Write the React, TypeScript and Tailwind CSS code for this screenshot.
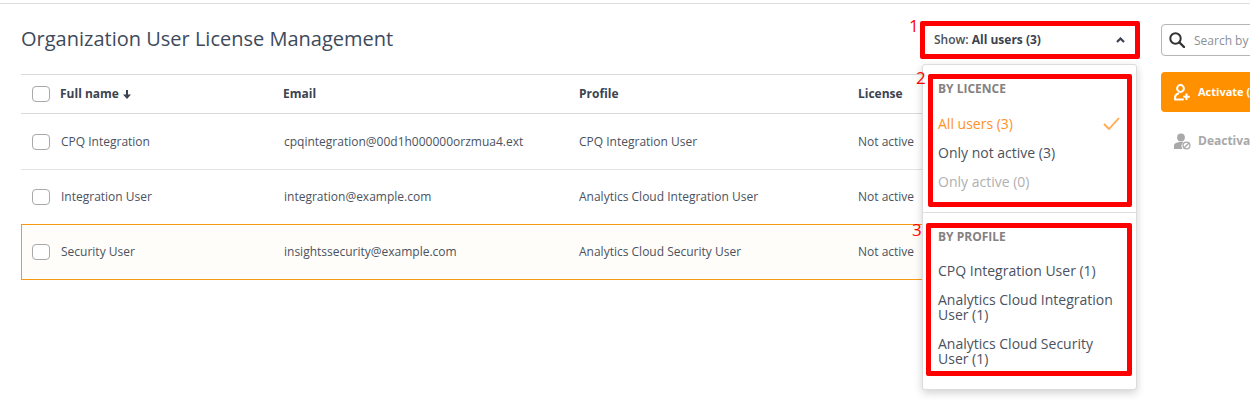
const font = { fontFamily: '"Open Sans", sans-serif' };

const rows = [
  { name: "CPQ Integration", email: "cpqintegration@00d1h000000orzmua4.ext", profile: "CPQ Integration User" },
  { name: "Integration User", email: "integration@example.com", profile: "Analytics Cloud Integration User" },
  { name: "Security User", email: "insightssecurity@example.com", profile: "Analytics Cloud Security User" },
];

function Box() {
  return <span className="block w-[18px] h-[16px] shrink-0 rounded-[4px] border border-[#a9a9a9] bg-white" />;
}

function SortArrow() {
  return (
    <svg width="8" height="9" viewBox="0 0 8 9" className="shrink-0">
      <path d="M3 0h2v4.500h3L4 9 0 4.500h3z" fill="#3b4350" />
    </svg>
  );
}

function SearchGlyph() {
  return (
    <svg width="16" height="16" viewBox="0 0 16 16" className="shrink-0">
      <circle cx="6.500" cy="6.500" r="5.200" fill="none" stroke="#333" strokeWidth="2" />
      <path d="M10.500 10.500L15 15" stroke="#333" strokeWidth="2.400" strokeLinecap="round" />
    </svg>
  );
}

function ActivateIcon() {
  return (
    <svg width="17" height="17" viewBox="0 0 17 17" className="shrink-0" fill="none" stroke="#fff" strokeWidth="2">
      <circle cx="6.500" cy="4.500" r="3.400" />
      <path d="M1 15.500v-1.800c0-2.200 1.500-3.500 3.200-4.200M9 15.500H1" strokeLinecap="round" />
      <path d="M12.500 9.500v6.500M9.300 12.800h6.500" strokeWidth="2.100" />
    </svg>
  );
}

function DeactivateIcon() {
  return (
    <svg width="17" height="17" viewBox="0 0 17 17" className="shrink-0">
      <circle cx="7" cy="4.500" r="3.900" fill="#a9a9a9" />
      <path d="M0 16v-3c0-3 3-4 7-4 1 0 2 .1 2.600.3A5 5 0 0 0 8.500 16z" fill="#a9a9a9" />
      <circle cx="12.500" cy="12.500" r="3.400" fill="none" stroke="#a9a9a9" strokeWidth="1.300" />
      <path d="M10.200 14.800l4.600-4.600" stroke="#a9a9a9" strokeWidth="1.300" />
    </svg>
  );
}

export default function App() {
  return (
    <div className="relative w-[1250px] h-[406px] overflow-hidden bg-white pt-[3px]" style={font}>
      <div className="h-px bg-[#dedede]" />
      <div className="flex pl-[21px]">
        <main className="w-[1116px] shrink-0">
          <div className="flex items-center h-[70px]">
            <h1 className="text-[20px] leading-[28px] text-[#3e4a5b] font-normal">Organization User License Management</h1>
          </div>
          <div className="w-[904px]">
            <div className="flex items-center h-[40px] border-y border-[#d9d9d9] text-[12px] font-bold text-[#3b4350]">
              <div className="w-[262px] flex items-center pl-[11px] gap-[10px]">
                <Box />
                <span className="flex items-center gap-[4px]">Full name <SortArrow /></span>
              </div>
              <div className="w-[296px]">Email</div>
              <div className="w-[279px]">Profile</div>
              <div>License</div>
            </div>
            {rows.map((r, i) => (
              <div
                key={r.name}
                className={
                  i === 2
                    ? "flex items-center h-[56px] border border-[#f59a14] bg-[#fffdf9] text-[12px] text-[#4a5260]"
                    : i === 1
                      ? "flex items-center h-[54px] text-[12px] text-[#4a5260]"
                      : "flex items-center h-[56px] border-b border-[#e3e3e3] text-[12px] text-[#4a5260]"
                }
              >
                <div className={i === 2 ? "w-[262px] flex items-center pl-[10px] gap-[11px]" : "w-[263px] flex items-center pl-[11px] gap-[11px]"}>
                  <Box />
                  <span>{r.name}</span>
                </div>
                <div className="w-[295px]">{r.email}</div>
                <div className="w-[279px]">{r.profile}</div>
                <div>Not active</div>
              </div>
            ))}
          </div>
        </main>
        <aside className="ml-[24px] w-[200px] shrink-0 pt-[20px]">
          <div className="flex items-center gap-[9px] h-[32px] pl-[7px] border border-[#b5b5b5] rounded-[4px] text-[12px] text-[#8a8f96]">
            <SearchGlyph />
            <span className="whitespace-nowrap pt-[2px]">Search by name or email</span>
          </div>
          <div className="mt-[16px] flex items-center gap-[7px] h-[40px] pl-[13px] rounded-[4px] bg-[#ff9100] text-white text-[11px] font-bold">
            <ActivateIcon />
            <span className="whitespace-nowrap pt-[1px]">Activate (0)</span>
          </div>
          <div className="mt-[9px] flex items-center gap-[7px] h-[40px] pl-[13px] text-[#a8a8a8] text-[12px] font-bold">
            <DeactivateIcon />
            <span className="whitespace-nowrap">Deactivate (0)</span>
          </div>
        </aside>
      </div>

      {/* Show filter toggle, lying over the table header area */}
      <div className="absolute left-[925px] top-[26px] w-[210px] h-[28px] flex items-center justify-between pl-[9px] pr-[10px] text-[12px] text-[#4a4f58]">
        <span><span className="font-semibold">Show: </span><span className="font-bold text-[#3b4350]">All users (3)</span></span>
        <svg width="9" height="6" viewBox="0 0 9 6" className="shrink-0">
          <path d="M1 5l3.500-3.500L8 5" fill="none" stroke="#3b4350" strokeWidth="2.200" />
        </svg>
      </div>

      {/* Filter menu */}
      <div className="absolute left-[922px] top-[64px] w-[215px] h-[326px] rounded-[3px] bg-white border border-[#dcdcdc] shadow-[0_3px_8px_rgba(0,0,0,0.18)] text-[14px] leading-[15px] text-[#4a5260]">
        <div className="pl-[15px] pr-[16px] pt-[17px]">
          <div className="text-[12px] leading-[14px] font-bold text-[#85817f]">BY LICENCE</div>
          <div className="mt-[20px] flex items-center justify-between h-[15px] text-[#ff9126]">
            <span>All users (3)</span>
            <svg width="17" height="13" viewBox="0 0 17 13" className="shrink-0">
              <path d="M1 7l5 5L16 1" fill="none" stroke="#ffa94d" strokeWidth="1.800" />
            </svg>
          </div>
          <div className="mt-[14px]">Only not active (3)</div>
          <div className="mt-[14px] text-[#b0b0b0]">Only active (0)</div>
        </div>
        <div className="mt-[23px] h-px bg-[#dedede]" />
        <div className="pl-[15px] pr-[14px] pt-[17px]">
          <div className="text-[12px] leading-[14px] font-bold text-[#85817f]">BY PROFILE</div>
          <div className="mt-[19px]">CPQ Integration User (1)</div>
          <div className="mt-[14px]">Analytics Cloud Integration User (1)</div>
          <div className="mt-[14px]">Analytics Cloud Security User (1)</div>
        </div>
      </div>

      {/* Numbered red callouts */}
      <div className="absolute left-[920px] top-[21px] w-[220px] h-[38px] border-[5px] border-[#ff0000] rounded-[2px]" />
      <div className="absolute left-[928px] top-[74px] w-[204px] h-[133px] border-[5px] border-[#ff0000] rounded-[2px]" />
      <div className="absolute left-[926px] top-[223px] w-[206px] h-[153px] border-[5px] border-[#ff0000] rounded-[2px]" />
      <span className="absolute left-[909px] top-[16px] text-[17px] leading-[20px] text-[#ff0000]">1</span>
      <span className="absolute left-[916px] top-[68px] text-[17px] leading-[20px] text-[#ff0000]">2</span>
      <span className="absolute left-[912px] top-[220px] text-[17px] leading-[20px] text-[#ff0000]">3</span>
    </div>
  );
}
